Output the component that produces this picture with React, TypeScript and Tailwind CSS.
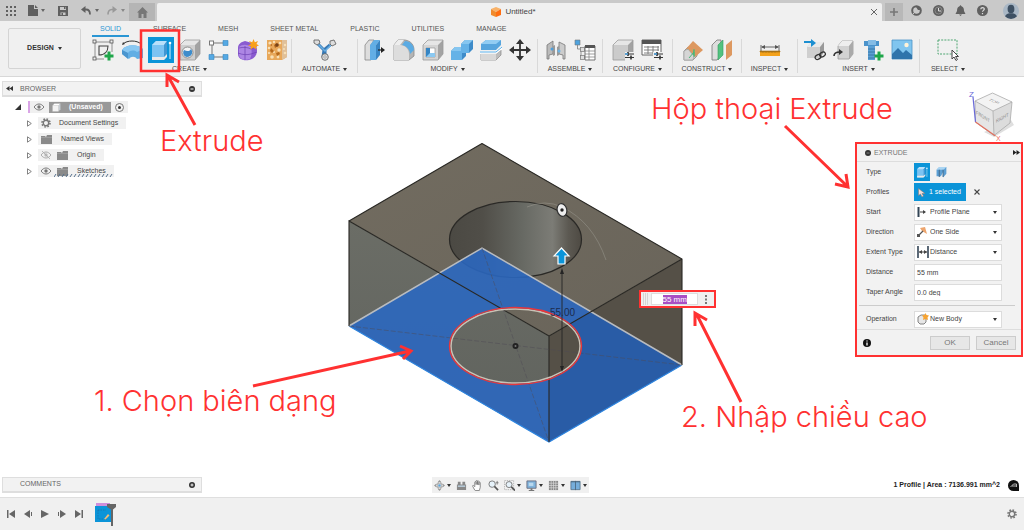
import React, { useState } from "react";
import clsx from "clsx";

type IconProps = { children: React.ReactNode; size?: string; box?: string };

function Icon({ children, size = "size-[22px]", box = "0 0 22 22" }: IconProps) {
  return (
    <svg className={clsx("shrink-0", size)} viewBox={box} fill="none" aria-hidden="true">
      {children}
    </svg>
  );
}

function Caret({ className = "text-[#333]" }: { className?: string }) {
  return (
    <svg className={clsx("h-[3px] w-1 shrink-0", className)} viewBox="0 0 4 3" aria-hidden="true">
      <path d="M0 0h4L2 3z" fill="currentColor" />
    </svg>
  );
}

// grey / blue isometric block shared by several ribbon icons
function Block({ front = "#cfcfcf", top = "#e6e6e6", side = "#a3a3a3" }) {
  return (
    <>
      <path d="M1 6l5-5h15l-5 5z" fill={top} />
      <path d="M16 6l5-5v14l-5 6z" fill={side} />
      <path d="M1 6h15v15H1z" fill={front} />
      <path d="M1 6l5-5h15v14l-5 6H1z" stroke="#9b9b9b" strokeWidth=".8" />
    </>
  );
}

const sketchIcon = (
  <Icon>
    <path d="M3 3h17M3 3v17M20 3v10M3 20h9" stroke="#777" strokeWidth=".8" />
    <path d="M7 7h9c0 5-3 9-9 9z" stroke="#444" strokeWidth="1.1" />
    {[[1, 1], [18, 1], [1, 18]].map(([x, y]) => (
      <rect key={`${x}${y}`} x={x} y={y} width="3" height="3" fill="#f0f0f0" stroke="#555" strokeWidth=".8" />
    ))}
    <path d="M17 12.500v9M12.500 17h9" stroke="#1fa64a" strokeWidth="3" />
  </Icon>
);

const revolveIcon = (
  <Icon>
    <path d="M2 5C6 1 16 1 20 5" stroke="#333" strokeWidth="1" />
    <path d="M1 6l1-3 2 2z" fill="#333" />
    <path d="M1 11C5 5 17 5 22 10v9l-6 1c-2-3-6-3-8 0l-7-5z" fill="#62aee4" />
    <path d="M1 11C5 5 17 5 22 10l-6 3c-3-2-7-2-9 1z" fill="#8ac8f2" />
    <path d="M1 11l6 3v6l-6-5z" fill="#4b96cf" />
  </Icon>
);

const extrudeIcon = (
  <Icon>
    <path d="M2 6l4-4h11l-2 4v12l-2 3H2z" fill="#7cc3f2" />
    <path d="M2 6l4-4h11l-3 4z" fill="#b9e0fa" />
    <path d="M14 6l3-4v14l-3 5z" fill="#4196d2" />
    <path d="M2 18h12l3-3v3l-3 3H2z" fill="#e9e9e9" />
    <path d="M20 4v16" stroke="#d9f0ff" strokeWidth="1" />
    <circle cx="20" cy="4" r="1.300" fill="#fff" />
  </Icon>
);

const holeIcon = (
  <Icon>
    <Block />
    <circle cx="8.500" cy="13.500" r="5.500" fill="#f5f5f5" stroke="#777" strokeWidth=".8" />
    <path d="M5 11c4 2 6 1 7-1 3 4 0 8-4 8-3 0-5-4-3-7z" fill="#3d8ccb" />
  </Icon>
);

const patternIcon = (
  <Icon>
    <path d="M5 4h11M4 5v11M5 18h11" stroke="#777" strokeWidth="1" />
    <rect x="1.500" y="2" width="4" height="4" fill="#fff" stroke="#777" />
    <path d="M15 1.500h5v5h-5zM1 15.500h5v5H1zM15 15.500h5v5h-5z" fill="#55a9e4" stroke="#3986bd" strokeWidth=".6" />
  </Icon>
);

const formIcon = (
  <Icon>
    <path d="M1 9c0-4 3-6 7-7l7 2c4 2 5 4 5 7 0 6-3 9-8 10-6 1-11-1-11-6z" fill="#8a5bd0" />
    <path d="M2 8c3-3 8-3 12 0 1 4 1 8-1 12-6 2-11 0-11-5z" fill="#ad86e4" />
    <path d="M2 9c4-1 8-1 12 1l6-3M8 7v14M1 14c5 2 9 2 13 1l6-2" stroke="#6f42b3" strokeWidth=".7" />
    <path d="M16.500 0l1.300 3.200L21 2l-1.500 3L22 6.500l-3 1 .5 3-3-2-3 2 .5-3-3-1 3-1.500L12 2l3.200 1.200z" fill="#f8a01c" />
  </Icon>
);

const volumetricIcon = (
  <Icon>
    <path d="M1 1h20v17l-5 3H1z" fill="#e8a85a" />
    <path d="M16 1h5v17l-5 3z" fill="#e0c099" />
    <g fill="#f8e0b6">
      <circle cx="4" cy="4" r="1.600" /><circle cx="8" cy="3" r="1.200" /><circle cx="3" cy="9" r="1.300" />
      <circle cx="13" cy="11" r="1.700" /><circle cx="6" cy="18" r="1.800" /><circle cx="12" cy="18" r="1.400" />
      <circle cx="19" cy="14" r="1.300" /><circle cx="19" cy="6" r="1.200" /><circle cx="3" cy="14" r="1.100" />
      <circle cx="14" cy="4" r="1.300" /><circle cx="18" cy="10" r="1" /><circle cx="8" cy="13" r="1" />
    </g>
    <path d="M8 6l3-2 1 3-3 2zM5 9l3 3-2 2-2-2zM10 14l3-1 1 2-3 2zM4 6l2-1v2z" fill="#b5691c" />
    <circle cx="11" cy="6" r="1.800" fill="#77431a" />
  </Icon>
);

const automateIcon = (
  <Icon size="h-[22px] w-6" box="0 0 24 22">
    <path d="M5 5l6 6 6-5M12 11v6M11 11l-1 7" stroke="#3779b5" strokeWidth="3" />
    <path d="M5 5l7 7 7-7" stroke="#69afe4" strokeWidth="1.500" />
    <path d="M1 1h5l1 3-3 2-3-2zM17 2l4-1 2 4-4 2-2-2z" fill="#ddd" stroke="#666" strokeWidth=".9" />
    <circle cx="12" cy="18" r="3.300" fill="#ddd" stroke="#666" strokeWidth=".9" />
    <circle cx="12" cy="18" r="1.200" fill="#fff" stroke="#777" strokeWidth=".6" />
  </Icon>
);

const pressPullIcon = (
  <Icon>
    <path d="M1 6l4-5h5L7 6v15H1z" fill="#ddd" stroke="#888" strokeWidth=".8" />
    <path d="M6 6l4-5h6l-4 5v15H6z" fill="#62aee5" />
    <path d="M12 6l4-5v15l-4 5z" fill="#3985c2" />
    <path d="M14 11h5" stroke="#222" strokeWidth="1.200" />
    <path d="M17 8l4 3-4 3z" fill="#222" />
  </Icon>
);

const filletIcon = (
  <Icon>
    <path d="M1 6l4-5h7c6 1 9 5 9 10v6l-5 4H1z" fill="#b5b5b5" stroke="#888" strokeWidth=".8" />
    <path d="M1 6l4-5h6L7 6z" fill="#eee" />
    <path d="M1 6h6c5 0 9 4 9 9v6H1z" fill="#ddd" />
    <path d="M9 6l3-4c5 0 9 4 9 9l-4 4c0-4-3-8-8-9z" fill="#5babe3" />
  </Icon>
);

const shellIcon = (
  <Icon>
    <Block front="#d4d4d4" />
    <path d="M4 9h9v9H4z" fill="#fff" stroke="#888" strokeWidth=".6" />
    <path d="M4 9l4 0v5h5v4H4z" fill="#3585c4" />
    <path d="M8 14h5v4H4z" fill="#8bc9f2" />
  </Icon>
);

const combineIcon = (
  <Icon>
    <path d="M10 5l4-4h8v9l-4 4h-3v3l-4 4H0v-9l4-4h6z" fill="#3d8bc9" />
    <path d="M10 5h8v9h-7v7H0v-9h10z" fill="#65b2e7" />
    <path d="M10 5l4-4h8l-4 4zM0 12l4-4h6v4z" fill="#86c6f0" />
  </Icon>
);

const splitIcon = (
  <Icon>
    <path d="M1 5l5-4h15v5l-5 5H1z" fill="#57a5dd" />
    <path d="M1 5l5-4h15l-5 4z" fill="#92cdf3" />
    <path d="M1 15h15l5-4v5l-5 5H1z" fill="#bcbcbc" stroke="#888" strokeWidth=".7" />
    <path d="M1 15h15v6H1z" fill="#d8d8d8" />
    <path d="M0 13.500h16l6-5" stroke="#fff" strokeWidth="2.500" />
    <path d="M0 13h16l6-5" stroke="#58aee8" strokeWidth="1" />
  </Icon>
);

const moveIcon = (
  <Icon>
    <path d="M11 3v16M3 11h16" stroke="#333" strokeWidth="1.800" />
    <path d="M11 0l4 5H7zM11 22l4-5H7zM0 11l5-4v8zM22 11l-5-4v8z" fill="#333" />
  </Icon>
);

const jointIcon = (
  <Icon>
    <path d="M2 6l6-4v13l-4 1v4H2z" fill="#bbb" stroke="#777" strokeWidth=".8" />
    <path d="M20 6l-6-3v12l4 1v4h2z" fill="#ccc" stroke="#777" strokeWidth=".8" />
    <path d="M8 7l2-1v10l-2 1zM14 7l-2 1v9l2-1z" fill="#999" />
    <circle cx="7" cy="10" r="1.500" fill="#4da0dd" />
    <circle cx="14" cy="12" r="1.500" fill="#69b4e7" />
  </Icon>
);

const bomIcon = (
  <Icon>
    <path d="M1 1h5v5H1z" fill="#4ea3df" stroke="#777" strokeWidth=".6" />
    <path d="M3.500 6v4H7v9h3M7 10h3" stroke="#888" strokeWidth=".9" />
    <rect x="6.500" y="8.500" width="4" height="4" fill="#ddd" stroke="#777" strokeWidth=".7" />
    <rect x="6.500" y="16.500" width="4" height="4" fill="#ddd" stroke="#777" strokeWidth=".7" />
    <path d="M11 7h10v14H11z" fill="#fff" stroke="#666" strokeWidth=".9" />
    <path d="M11 6h10v3H11z" fill="#555" />
    <path d="M11 12h10M11 15h10M11 18h10M15 9v12" stroke="#777" strokeWidth=".7" />
  </Icon>
);

const adjusters = (
  <>
    <path d="M13 15h9M13 18.500h9" stroke="#333" strokeWidth="1" />
    <path d="M16 13v4M19 16.500v4" stroke="#333" strokeWidth="1.600" />
    <path d="M13 15h3" stroke="#4ea3df" strokeWidth="1.600" />
  </>
);

const configureIcon = (
  <Icon>
    <Block front="#cbcbcb" />
    <path d="M13 13h9v9h-9z" fill="#f0f0f0" />
    {adjusters}
  </Icon>
);

const configTableIcon = (
  <Icon>
    <path d="M1 1h19v15H1z" fill="#fff" stroke="#555" strokeWidth=".9" />
    <path d="M1 1h19v4H1z" fill="#555" />
    <path d="M3 8h15M3 11h15M3 14h10M7 7v8M12 7v8M17 7v5" stroke="#777" strokeWidth=".9" />
    <path d="M12 13h10v9H12z" fill="#f0f0f0" />
    {adjusters}
  </Icon>
);

const planeIcon = (
  <Icon>
    <path d="M2 12l4-4h9v9l-4 4H2z" fill="#ccc" stroke="#888" strokeWidth=".8" />
    <path d="M2 12h9v9H2z" fill="#e4e4e4" />
    <path d="M11 2l10 9-8 7-9-8z" fill="#dd9860" />
    <path d="M5 10l7 7v-7M11 18l1-7" stroke="#49b878" strokeWidth="1" />
    <path d="M2 12l4-2 6 7-1 4H2z" fill="#d5d5d5" stroke="#999" strokeWidth=".6" />
    <path d="M7 19l5-6v5" stroke="#49b878" strokeWidth="1" />
  </Icon>
);

const midplaneIcon = (
  <Icon>
    <path d="M1 6l5-5h4v15l-4 5H1z" fill="#ddd" stroke="#777" strokeWidth=".8" />
    <path d="M7 6l5-5v15l-5 5z" fill="#52c27f" stroke="#349a5e" strokeWidth=".6" />
    <path d="M15 6l6-5v15l-6 5z" fill="#dd9860" />
  </Icon>
);

const measureIcon = (
  <Icon>
    <path d="M2 6v6M20 6v6M3 8h16" stroke="#555" strokeWidth=".9" />
    <path d="M2 8l4-2v4zM20 8l-4-2v4z" fill="#555" />
    <path d="M1 12h20v5H1z" fill="#f4a21b" />
    <path d="M1 12h20v1H1zM4 12v2M7 12v2M10 12v2M13 12v2M16 12v2" fill="#a97418" stroke="#a97418" strokeWidth=".6" />
  </Icon>
);

const deriveIcon = (
  <Icon>
    <path d="M3 8l4-5h13l-4 5v11H3z" fill="#cfcfcf" />
    <path d="M3 8l4-5h13l-4 5z" fill="#eaeaea" />
    <path d="M16 8l4-5v10l-4 6z" fill="#999" />
    <path d="M0 3h8" stroke="#1c8fd1" strokeWidth="2" />
    <path d="M7 0l5 4-5 4z" fill="#1c8fd1" />
    <ellipse cx="14" cy="18" rx="3" ry="2.200" transform="rotate(-30 14 18)" stroke="#333" strokeWidth="1.300" />
    <ellipse cx="18.500" cy="15.500" rx="3" ry="2.200" transform="rotate(-30 18.500 15.500)" stroke="#333" strokeWidth="1.300" />
  </Icon>
);

const insertPartIcon = (
  <Icon>
    <path d="M5 7l4-5h11v13l-4 5H5z" fill="#d2d2d2" stroke="#999" strokeWidth=".8" />
    <path d="M5 7l4-5h11l-4 5z" fill="#eee" />
    <path d="M16 7l4-5v13l-4 5z" fill="#aaa" />
    <path d="M1 17c0-3 2-4 6-4" stroke="#333" strokeWidth="1.600" />
    <path d="M6 10l4 3-4 3z" fill="#333" />
  </Icon>
);

const fastenerIcon = (
  <Icon>
    <path d="M2 2h15v5H2z" fill="#4b93cb" />
    <path d="M6 1h8v5H6z" fill="#85bce5" />
    <path d="M6 7h7v14H6z" fill="#5b9fd4" />
    <path d="M6 10h7M6 13h7M6 16h7M6 19h7" stroke="#316f9f" strokeWidth=".8" />
    <path d="M17 12.500v9M12.500 17h9" stroke="#1fa64a" strokeWidth="3" />
  </Icon>
);

const canvasIcon = (
  <Icon>
    <path d="M1 1h20v19H1z" fill="#80c5ef" stroke="#4a93c6" strokeWidth=".8" />
    <circle cx="15.500" cy="6" r="2.200" fill="#fff3d8" />
    <path d="M1 15l6-6 5 5 3-3 6 5v4H1z" fill="#2f74ab" />
  </Icon>
);

const selectIcon = (
  <Icon size="h-[22px] w-6" box="0 0 24 22">
    <path d="M2 1h19v14H2z" stroke="#4ea672" strokeWidth="1" strokeDasharray="2 1.200" />
    <path d="M16 11v9l2-2 2 3.500 1.500-1-2-3h3z" fill="#fff" stroke="#444" strokeWidth="1" />
  </Icon>
);

const groups = [
  {
    name: "CREATE",
    width: "w-[204px]",
    icons: [sketchIcon, revolveIcon, extrudeIcon, holeIcon, patternIcon, formIcon, volumetricIcon],
  },
  { name: "AUTOMATE", width: "w-[66px]", icons: [automateIcon] },
  {
    name: "MODIFY",
    width: "w-[180px]",
    icons: [pressPullIcon, filletIcon, shellIcon, combineIcon, splitIcon, moveIcon],
  },
  { name: "ASSEMBLE", width: "w-[65px]", icons: [jointIcon, bomIcon] },
  { name: "CONFIGURE", width: "w-[70px]", icons: [configureIcon, configTableIcon] },
  { name: "CONSTRUCT", width: "w-[69px]", icons: [planeIcon, midplaneIcon] },
  { name: "INSPECT", width: "w-[56px]", icons: [measureIcon] },
  { name: "INSERT", width: "w-[122px]", icons: [deriveIcon, insertPartIcon, fastenerIcon, canvasIcon] },
  { name: "SELECT", width: "w-[56px]", icons: [selectIcon] },
];

const tabs = ["SOLID", "SURFACE", "MESH", "SHEET METAL", "PLASTIC", "UTILITIES", "MANAGE"];

function TitleBar() {
  return (
    <header className="flex h-[21px] bg-[#c9c9c9] text-[#606060]">
      <div className="flex w-[129px] shrink-0 items-center pl-[6px]">
        <button aria-label="Data panel">
          <Icon size="size-[10px]" box="0 0 10 10">
            {[0, 4, 8].map((y) => (
              <path key={y} d={`M0 ${y}h2v2H0zM4 ${y}h2v2H4zM8 ${y}h2v2H8z`} fill="currentColor" />
            ))}
          </Icon>
        </button>
        <button aria-label="File" className="ml-3 flex items-center gap-[3px]">
          <Icon size="h-[11px] w-[10px]" box="0 0 10 11">
            <path d="M0 0h6v4h4v7H0zM7 0l3 3H7z" fill="currentColor" />
          </Icon>
          <Caret className="text-[#666]" />
        </button>
        <button aria-label="Save" className="ml-[13px]">
          <Icon size="size-[10px]" box="0 0 10 10">
            <path d="M0 0h10v10H0z" fill="currentColor" />
            <path d="M2 1h6v3H2zM2.500 6.500h5V9h-5z" fill="#c9c9c9" />
            <path d="M6 1h1.500v2H6zM3.500 7h1.500v2H3.500z" fill="currentColor" />
          </Icon>
        </button>
        <button aria-label="Undo" className="ml-[13px] flex items-center gap-1">
          <Icon size="h-[10px] w-[10px]" box="0 0 10 10">
            <path d="M3.500 3.500H5c3 0 4 2 4 5" stroke="currentColor" strokeWidth="1.800" />
            <path d="M0 3.500L4.500 0v7z" fill="currentColor" />
          </Icon>
          <Caret className="text-[#666]" />
        </button>
        <button aria-label="Redo" className="ml-2 flex items-center gap-1 text-[#999]">
          <Icon size="h-[10px] w-[10px]" box="0 0 10 10">
            <path d="M6.500 3.500H5c-3 0-4 2-4 5" stroke="currentColor" strokeWidth="1.600" />
            <path d="M10 3.500L5.500 0v7z" fill="currentColor" />
          </Icon>
          <Caret className="text-[#888]" />
        </button>
      </div>
      <button aria-label="Home" className="mt-[3px] flex w-[26px] shrink-0 items-center justify-center bg-[#b5b5b5]">
        <Icon size="size-[11px]" box="0 0 11 11">
          <path d="M5.500 0L11 5.500H9.500V11h-3V7h-2v4h-3V5.500H0z" fill="#777" />
        </Icon>
      </button>
      <div className="mt-[3px] ml-[2px] flex flex-1 items-center rounded-t-xs bg-[#f0f0f0] pr-1">
        <div className="flex flex-1 items-center justify-center gap-1 text-[8px] leading-[18px] text-[#444]">
          <Icon size="size-[10px]" box="0 0 10 10">
            <path d="M5 0l5 2-5 3-5-3z" fill="#f9b268" />
            <path d="M0 2l5 3v5L0 8z" fill="#f08a2c" />
            <path d="M10 2L5 5v5l5-2z" fill="#ff6d10" />
          </Icon>
          Untitled*
        </div>
        <button aria-label="Close">
          <Icon size="size-2" box="0 0 8 8">
            <path d="M1 1l6 6M7 1L1 7" stroke="#666" strokeWidth="1" />
          </Icon>
        </button>
      </div>
      <button aria-label="New tab" className="mt-[3px] ml-[3px] flex w-[18px] items-center justify-center bg-[#b8b8b8]">
        <Icon size="size-2" box="0 0 8 8">
          <path d="M4 0v8M0 4h8" stroke="#777" strokeWidth="1.600" />
        </Icon>
      </button>
      <div className="flex items-center gap-[11px] pr-[5px] pl-2">
        <button aria-label="Extensions">
          <Icon size="size-[11px]" box="0 0 11 11">
            <circle cx="5.500" cy="5.500" r="4.300" stroke="currentColor" strokeWidth="2" />
            <path d="M5 2h4v3H7z" fill="currentColor" />
            <path d="M2 9l3-3" stroke="#c9c9c9" strokeWidth="1" />
          </Icon>
        </button>
        <button aria-label="Job status">
          <Icon size="size-[11px]" box="0 0 11 11">
            <circle cx="5.500" cy="5.500" r="5.500" fill="currentColor" />
            <circle cx="5.500" cy="5.500" r="3.500" stroke="#999" strokeWidth=".7" />
            <path d="M5.500 3v3H8" stroke="#ddd" strokeWidth="1" />
          </Icon>
        </button>
        <button aria-label="Notifications">
          <Icon size="size-[11px]" box="0 0 11 11">
            <path d="M5.500 0l1 1.300C8.500 2 9 4 9 6l1.500 3H.5L2 6c0-2 .5-4 2.500-4.700zM4 9.500h3L5.500 11z" fill="currentColor" />
          </Icon>
        </button>
        <button aria-label="Help">
          <Icon size="size-[11px]" box="0 0 11 11">
            <circle cx="5.500" cy="5.500" r="5.500" fill="currentColor" />
            <path d="M3.800 4.300c0-2.300 3.500-2.300 3.500-.2 0 1.300-1.800 1.300-1.800 2.700M5.500 8v1.300" stroke="#ddd" strokeWidth="1.200" />
          </Icon>
        </button>
        <button aria-label="Account" className="ml-1">
          <Icon size="size-4" box="0 0 16 16">
            <circle cx="8" cy="8" r="8" fill="#a9b7c5" />
            <ellipse cx="8" cy="6" rx="3.400" ry="4.300" fill="#3e5063" />
            <path d="M2 13.200c1-2.200 3-2.500 4.500-3h3c1.500.5 3.500.8 4.500 3A8 8 0 012 13.200z" fill="#3e5063" />
          </Icon>
        </button>
      </div>
    </header>
  );
}

function Ribbon() {
  const [active, setActive] = useState("SOLID");
  return (
    <div className="flex h-14 border-b border-[#d8d8d8] bg-[#f0f0f0]">
      <button className="mt-[7px] ml-2 flex h-[41px] w-[73px] shrink-0 items-center justify-center gap-1 rounded-xs border border-[#d4d4d4] text-[7px] font-bold text-[#333]">
        DESIGN <Caret />
      </button>
      <div className="ml-[7px] min-w-0 flex-1">
        <nav className="ml-1 flex h-4 gap-4">
          {tabs.map((tab) => (
            <button
              key={tab}
              onClick={() => setActive(tab)}
              className={clsx(
                "border-b-2 px-2 pt-[2px] text-[7px] leading-3",
                tab === active ? "border-[#2a96d4] text-[#2a96d4]" : "border-transparent text-[#555]"
              )}
            >
              {tab}
            </button>
          ))}
        </nav>
        <div className="mt-[2px] flex">
          {groups.map((group) => (
            <section
              key={group.name}
              className={clsx("flex shrink-0 flex-col items-center border-r border-[#d9d9d9] last:border-r-0", group.width)}
            >
              <div className="flex h-[22px] gap-[7px]">
                {group.icons.map((icon, i) => (
                  <button
                    key={i}
                    aria-label={`${group.name} ${i + 1}`}
                    className={clsx("h-[22px]", icon === extrudeIcon && "bg-[#0b94d8] outline-2 outline-[#0b94d8]")}
                  >
                    {icon}
                  </button>
                ))}
              </div>
              <button className="mt-1 flex h-2 items-center gap-[3px] text-[7px] text-[#444]">
                {group.name} <Caret />
              </button>
            </section>
          ))}
        </div>
      </div>
    </div>
  );
}

function Eye({ hidden = false }: { hidden?: boolean }) {
  return (
    <Icon size="h-2 w-[10px]" box="0 0 10 8">
      <path d="M0 4c3-4 7-4 10 0-3 4-7 4-10 0z" stroke={hidden ? "#aaa" : "#777"} strokeWidth="1" />
      <circle cx="5" cy="4" r="1.700" fill={hidden ? "#bbb" : "#777"} />
      {hidden && <path d="M1 0l8 8" stroke="#aaa" strokeWidth=".8" />}
    </Icon>
  );
}

function Gear({ size }: { size: string }) {
  return (
    <Icon size={size} box="0 0 10 10">
      <circle cx="5" cy="5" r="4" stroke="#777" strokeWidth="1.600" strokeDasharray="1.600 1.540" />
      <circle cx="5" cy="5" r="2.700" stroke="#777" strokeWidth="1.400" />
    </Icon>
  );
}

function Folder() {
  return (
    <Icon size="h-[9px] w-[11px]" box="0 0 11 9">
      <path d="M0 1h4l1 1 1-2h5v9H0z" fill="#8a8a8a" />
      <path d="M0 2.500h11" stroke="#aaa" strokeWidth=".6" />
    </Icon>
  );
}

function TreeArrow() {
  return (
    <Icon size="h-[7px] w-[5px]" box="0 0 5 7">
      <path d="M.5.800v5.400L4.300 3.500z" stroke="#666" strokeWidth=".8" />
    </Icon>
  );
}

const treeRows = [
  { label: "Document Settings", icon: <Gear size="size-[10px]" />, gap: "gap-2" },
  { label: "Named Views", icon: <Folder />, gap: "gap-[9px]" },
  { label: "Origin", icon: <Folder />, eye: <Eye hidden />, gap: "gap-[9px]" },
  { label: "Sketches", icon: <Folder />, eye: <Eye />, gap: "gap-[9px]", hatched: true },
];

function Browser() {
  return (
    <aside className="mt-1 ml-[2px] w-[200px] text-[7px] text-[#444]">
      <div className="flex h-4 items-center border border-b-2 border-[#dedede] bg-[#f2f2f2] px-[3px] text-[#666]">
        <button aria-label="Collapse">
          <Icon size="h-[5px] w-[7px]" box="0 0 7 5">
            <path d="M3.500 0v5L0 2.500zM7 0v5L3.500 2.500z" fill="#333" />
          </Icon>
        </button>
        <span className="ml-[7px] flex-1 leading-[14px]">BROWSER</span>
        <button aria-label="Minimize" className="mr-[3px]">
          <Icon size="size-[6px]" box="0 0 6 6">
            <circle cx="3" cy="3" r="3" fill="#333" />
            <path d="M1.500 3h3" stroke="#fff" strokeWidth="1" />
          </Icon>
        </button>
      </div>
      <ul>
        <li className="mt-[2px] flex h-4 items-center pl-[13px]">
          <Icon size="size-[6px]" box="0 0 6 6">
            <path d="M6 0v6H0z" fill="#333" />
          </Icon>
          <div className="ml-[7px] flex h-3 items-center border-l-2 border-[#d9a4e6] bg-[#f0f0f0] pl-1">
            <Eye />
            <span className="ml-[5px] flex h-[11px] items-center gap-2 bg-[#999] pr-2 pl-[3px] font-bold text-white">
              <Icon size="size-[9px]" box="0 0 22 22">
                <Block front="#f3f3f3" top="#fff" side="#c9cfd6" />
              </Icon>
              (Unsaved)
            </span>
            <input
              type="radio"
              defaultChecked
              aria-label="Activate component"
              className="mx-1 size-[9px] appearance-none rounded-full border border-[#777] bg-[#333] bg-clip-content p-[2px]"
            />
          </div>
        </li>
        {treeRows.map((row) => (
          <li key={row.label} className="flex h-4 items-center pl-[25px]">
            <TreeArrow />
            <div className={clsx("relative ml-[6px] flex h-3 items-center bg-[#f1f1f1] pr-2 pl-[3px] leading-3", row.gap)}>
              <span className="flex items-center gap-[6px]">
                {row.eye}
                {row.icon}
              </span>
              {row.label}
              {row.hatched && (
                <svg className="absolute right-0 bottom-0 h-[3px] w-[60px]" viewBox="0 0 60 3" aria-hidden="true">
                  {Array.from({ length: 15 }, (_, i) => (
                    <path key={i} d={`M${i * 4} 3l2-3`} stroke="#55708c" strokeWidth="1" />
                  ))}
                </svg>
              )}
            </div>
          </li>
        ))}
      </ul>
    </aside>
  );
}

function ViewCube() {
  return (
    <svg className="mr-[6px] h-[54px] w-[52px]" viewBox="966 88 52 54" aria-label="View cube">
      <path d="M984 132l10 5 20-12-3-5z" fill="#d2d2d2" opacity=".7" />
      <path d="M975 101l17.500-8 19.500 9-19 9z" fill="#f3f3f3" />
      <path d="M975 101l18 10 1 24.500-18.500-13.500z" fill="#e5e5e5" />
      <path d="M1012 102l-19 9 1 24.500 16-12.500z" fill="#dcdcdc" />
      <path d="M975 101l17.500-8 19.500 9-2 21-16 12.500-18.500-13.500zM975 101l18 10 19-9M993 111l1 24.500" fill="none" stroke="#aaa" strokeWidth=".8" />
      <path d="M973 97l2.500 25" stroke="#6868d8" strokeWidth="1.200" />
      <path d="M975.500 122l20 14" stroke="#e2705e" strokeWidth="1.200" />
      <g className="font-[Liberation_Sans,sans-serif]" fontSize="5" fill="#888">
        <text transform="matrix(.9 .42 -.8 .4 988 100)">TOP</text>
        <text transform="matrix(.8 .5 0 1 976 114)">FRONT</text>
        <text transform="matrix(.8 -.45 0 1 996 123)">RIGHT</text>
        <text x="969" y="97" fontSize="8" fill="#6868d8">Z</text>
        <text x="996" y="141" fontSize="7" fill="#ee6a60">X</text>
      </g>
    </svg>
  );
}

const planeStart = (
  <Icon size="size-[10px]" box="0 0 10 10">
    <path d="M1.500 0v10" stroke="#334455" strokeWidth="2" />
    <path d="M3 5h5" stroke="#444" strokeWidth="1" />
    <path d="M6 3l3 2-3 2z" fill="#444" />
  </Icon>
);

const oneSide = (
  <Icon size="size-[10px]" box="0 0 10 10">
    <path d="M3 1l5-1 2 7-5-3z" fill="#eda56e" />
    <path d="M1 9l5-5" stroke="#555" strokeWidth="1.300" />
    <path d="M0 7h3v3H0z" fill="#555" />
  </Icon>
);

const distanceIcon = (
  <Icon size="size-3" box="0 0 12 12">
    <path d="M1 0v12M11 0v12" stroke="#334455" strokeWidth="1.600" />
    <path d="M2 6h8" stroke="#444" strokeWidth="1" />
    <path d="M2 6l3-2v4zM10 6L7 4v4z" fill="#444" />
  </Icon>
);

const newBody = (
  <Icon size="size-3" box="0 0 12 12">
    <path d="M1 4l3-2h5v7l-2 2H3L1 9z" fill="#e7e7e7" stroke="#777" strokeWidth=".9" />
    <path d="M8.500 0l1 2 2.500.5-1.500 2 .5 2.500-2.500-1L6 7l.5-2.500-1.500-2L7.500 2z" fill="#f6a331" />
  </Icon>
);

function Field({ label, children }: { label: string; children: React.ReactNode }) {
  return (
    <div className="flex h-5 items-center">
      <label htmlFor={label} className="w-12 shrink-0">
        {label}
      </label>
      {children}
    </div>
  );
}

function SelectField({ label, value, icon }: { label: string; value: string; icon: React.ReactNode }) {
  return (
    <Field label={label}>
      <div className="relative flex h-[17px] w-[88px] items-center border border-[#dcdcdc] bg-white">
        <span className="pointer-events-none absolute left-[2px]">{icon}</span>
        <select id={label} className="w-full appearance-none pl-[15px] leading-4 outline-none">
          <option>{value}</option>
        </select>
        <span className="pointer-events-none absolute right-1 flex">
          <Caret />
        </span>
      </div>
    </Field>
  );
}

function TextField({ label, value }: { label: string; value: string }) {
  return (
    <Field label={label}>
      <input
        id={label}
        defaultValue={value}
        className="h-[17px] w-[88px] border border-[#dcdcdc] bg-white pl-[2px] leading-[15px] outline-none"
      />
    </Field>
  );
}

function ExtrudeDialog() {
  return (
    <form
      onSubmit={(e) => e.preventDefault()}
      className="mr-px w-[168px] border-2 border-[#ff3131] bg-[#f2f2f2] text-[7px] text-[#444]"
    >
      <div className="flex h-[18px] items-center border-b border-[#ddd] pr-px pl-2 text-[#777]">
        <Icon size="size-[6px]" box="0 0 6 6">
          <circle cx="3" cy="3" r="3" fill="#333" />
          <path d="M1.500 3h3" stroke="#999" strokeWidth=".8" />
        </Icon>
        <h2 className="ml-[3px] flex-1 leading-4">EXTRUDE</h2>
        <Icon size="h-[5px] w-[7px]" box="0 0 7 5">
          <path d="M0 0v5l3.500-2.500zM3.500 0v5L7 2.500z" fill="#222" />
        </Icon>
      </div>
      <div className="pl-[9px]">
        <Field label="Type">
          <button id="Type" type="button" aria-label="Extrude" className="flex h-[18px] w-4 items-center justify-center bg-[#0b94d8]">
            <Icon size="size-3">{extrudeIcon.props.children}</Icon>
          </button>
          <button type="button" aria-label="Thin extrude" className="ml-[6px]">
            <Icon size="size-3">
              <path d="M1 7l5-5h13v12l-6 7V11l-4 8H1z" fill="#5b9fd4" />
              <path d="M1 7l5-5h13l-5 5z" fill="#abd5f2" />
              <path d="M6 7v13M13 7v13" stroke="#456f92" strokeWidth="2" />
            </Icon>
          </button>
        </Field>
        <Field label="Profiles">
          <button id="Profiles" type="button" className="flex h-[18px] w-[52px] items-center gap-1 bg-[#0b94d8] pl-1 text-white">
            <Icon size="h-[9px] w-[7px]" box="0 0 7 9">
              <path d="M.5.500v7L2.500 6 4 9l1.500-1L4 5.500h3z" fill="#f3dfda" stroke="#88736e" strokeWidth=".5" />
            </Icon>
            1 selected
          </button>
          <button type="button" aria-label="Clear selection" className="ml-2">
            <Icon size="size-[6px]" box="0 0 6 6">
              <path d="M.5.500l5 5M5.500.500l-5 5" stroke="#444" strokeWidth="1.100" />
            </Icon>
          </button>
        </Field>
        <SelectField label="Start" value="Profile Plane" icon={planeStart} />
        <SelectField label="Direction" value="One Side" icon={oneSide} />
        <SelectField label="Extent Type" value="Distance" icon={distanceIcon} />
        <TextField label="Distance" value="55 mm" />
        <TextField label="Taper Angle" value="0.0 deg" />
      </div>
      <div className="mr-[6px] ml-[2px] mt-[3px] border-t border-[#ccc] pt-[3px] pl-[7px]">
        <SelectField label="Operation" value="New Body" icon={newBody} />
      </div>
      <div className="flex h-[26px] items-center gap-[6px] border-t border-[#ddd] pr-[5px] pl-[6px] text-[8px] text-[#777]">
        <Icon size="size-2" box="0 0 8 8">
          <circle cx="4" cy="4" r="4" fill="#111" />
          <path d="M4 3.500V6.500M4 1.500v1" stroke="#fff" strokeWidth="1.300" />
        </Icon>
        <button className="ml-auto h-[14px] w-10 border border-[#ccc] bg-[#e7e7e7]">OK</button>
        <button type="button" className="h-[14px] w-10 border border-[#ccc] bg-[#e7e7e7]">
          Cancel
        </button>
      </div>
    </form>
  );
}

function Model() {
  return (
    <svg className="absolute inset-0 size-full" viewBox="0 77 1024 420" aria-label="Model">
      <defs>
        <linearGradient id="hole" x1="0" x2="1" y1="0" y2="0">
          <stop offset="0" stopColor="#4b4943" />
          <stop offset=".25" stopColor="#504e48" />
          <stop offset=".55" stopColor="#676963" />
          <stop offset=".78" stopColor="#7c7c76" />
          <stop offset=".9" stopColor="#5c5952" />
          <stop offset="1" stopColor="#4e4a43" />
        </linearGradient>
        <linearGradient id="left" x1="0" x2="0" y1="0" y2="1">
          <stop offset="0" stopColor="#6b6d66" />
          <stop offset="1" stopColor="#5f625d" />
        </linearGradient>
        <linearGradient id="top" x1="0" x2="1" y1="0" y2="1">
          <stop offset="0" stopColor="#726c60" />
          <stop offset="1" stopColor="#69645a" />
        </linearGradient>
      </defs>
      <path d="M482 143.500L682 259 549 336 349 221z" fill="url(#top)" />
      <path d="M349 221L549 336V442L349 326z" fill="url(#left)" />
      <path d="M682 259L549 336V442L682 365z" fill="#555047" />
      <ellipse cx="515.500" cy="239.500" rx="66" ry="38" fill="url(#hole)" stroke="#2a2926" strokeWidth="1.200" />
      <path
        d="M482 248L682 365 549 442 349 326zM449.500 346a66 38 0 10132 0a66 38 0 10-132 0z"
        fill="#2a68c2"
        fillOpacity=".88"
        fillRule="evenodd"
      />
      <path d="M570 324L591 312 682 365 549 442V378.700A66 38 0 00570 324z" fill="#12356e" fillOpacity=".18" />
      <path d="M349 326L549 442 682 365" fill="none" stroke="#2f86e0" strokeWidth="1.200" />
      <path d="M349 326L482 248 682 365" fill="none" stroke="#b9bcc0" strokeWidth="1.500" />
      <path d="M482 143.500L682 259V365M682 259L549 336V442M549 336L349 221V326M349 221L482 143.500" fill="none" stroke="#282723" strokeWidth="1.100" />
      <path d="M482 248L549 442M349 326L682 365" stroke="#4f4a55" strokeOpacity=".6" strokeWidth=".8" strokeDasharray="5 2" />
      <ellipse cx="515.500" cy="346" rx="64.500" ry="37" fill="none" stroke="#c9c2b6" strokeWidth="1.500" />
      <ellipse cx="515.500" cy="346" rx="66" ry="38.500" fill="none" stroke="#e8363c" strokeWidth="1.300" />
      <circle cx="515.500" cy="346" r="3" fill="#222" />
      <circle cx="515.500" cy="346" r="1" fill="#777" />
      <path d="M527 207Q545 199 562 207Q593 222 606 260" fill="none" stroke="#99968e" strokeOpacity=".6" strokeWidth=".9" />
      <path d="M562 272V370" stroke="#242424" strokeWidth=".9" />
      <path d="M562 268l2 6h-4zM562 372l2-6h-4z" fill="#242424" />
      <text x="550" y="316" className="font-[Liberation_Sans,sans-serif]" fontSize="10" fill="#1d2c4c">
        55.00
      </text>
      <ellipse cx="562" cy="210" rx="4.800" ry="6.500" transform="rotate(-15 562 210)" fill="#eee" stroke="#333" strokeWidth="1.200" />
      <circle cx="562" cy="210" r="1.700" fill="#222" />
      <path d="M561.500 248l7.500 8h-4v8h-7v-8h-4z" fill="#0b94d8" stroke="#fff" strokeWidth="1.200" />
    </svg>
  );
}

function DistanceInput() {
  return (
    <div className="absolute top-[213px] left-[639px] flex h-[18px] w-[77px] items-center border-2 border-[#ff3131] bg-[#f0f0f0] text-[8px]">
      <span className="mx-[2px] h-3 w-[6px] bg-[repeating-linear-gradient(90deg,#d5d5d5_0_1px,#f0f0f0_1px_2px)]" />
      <label className="flex h-3 flex-1 items-center justify-center border border-[#ddd] bg-white">
        <input
          aria-label="Distance value"
          defaultValue="55 mm"
          className="h-[9px] w-6 bg-[#a84fc4] text-center leading-[9px] text-white outline-none"
        />
      </label>
      <button aria-label="More" className="flex w-4 justify-center">
        <Icon size="h-[9px] w-[2px]" box="0 0 2 9">
          <path d="M0 0h2v2H0zM0 3.500h2v2H0zM0 7h2v2H0z" fill="#777" />
        </Icon>
      </button>
    </div>
  );
}

const navTools = [
  {
    name: "Orbit",
    caret: true,
    art: (
      <>
        <path d="M6 0l2 2.500H4zM6 12l2-2.500H4zM0 6l2.500-2v4zM12 6L9.500 4v4z" fill="#999" />
        <ellipse cx="6" cy="6" rx="4.500" ry="2" stroke="#999" strokeWidth=".8" />
        <ellipse cx="6" cy="6" rx="2" ry="4.500" stroke="#999" strokeWidth=".8" />
        <circle cx="6" cy="6" r="1.300" fill="#5ba5dc" />
      </>
    ),
  },
  {
    name: "Look at",
    art: (
      <>
        <path d="M1 5h10v6H1zM2 2h3v3H2zM7 2h3v3H7z" fill="#888" />
        <path d="M2 6h8v1.500H2z" fill="#bcd2e2" />
      </>
    ),
  },
  {
    name: "Pan",
    art: <path d="M3 11L.8 7c-.6-1 .6-1.500 1.200-.7l1 1V2.500c0-1 1.500-1 1.500 0V5 1.200c0-1 1.500-1 1.500 0V5 1.700c0-1 1.500-1 1.500 0V5.500 3c0-1 1.500-1 1.500 0v5l-1 3.500H3.500z" fill="#fff" stroke="#777" strokeWidth=".9" />,
  },
  {
    name: "Zoom",
    art: (
      <>
        <circle cx="4.500" cy="4.500" r="3.500" fill="#e6f2fa" stroke="#777" />
        <path d="M7 7l4 4" stroke="#555" strokeWidth="1.800" />
        <path d="M10 1v4M8.500 3h3" stroke="#666" strokeWidth=".8" />
      </>
    ),
  },
  {
    name: "Fit",
    caret: true,
    art: (
      <>
        <path d="M.5.500h10v10H.5z" stroke="#999" strokeWidth=".7" strokeDasharray="1.500 1" />
        <circle cx="5.500" cy="5" r="3.300" fill="#e6f2fa" stroke="#777" />
        <path d="M8 7.500l4 4" stroke="#555" strokeWidth="1.800" />
      </>
    ),
  },
  {
    name: "Display settings",
    caret: true,
    art: (
      <>
        <path d="M1 1h10v8H1z" fill="#7fb3dc" stroke="#667" strokeWidth=".9" />
        <path d="M3 3h5v3.500H3z" fill="#b9d8ee" />
        <path d="M5 9h2v2h2v1H3v-1h2z" fill="#777" />
      </>
    ),
  },
  {
    name: "Grid and snaps",
    caret: true,
    art: (
      <>
        <path d="M1 1h10v10H1z" fill="#888" />
        <path d="M3.500 1v10M6 1v10M8.500 1v10M1 3.500h10M1 6h10M1 8.500h10" stroke="#ddd" strokeWidth=".7" />
      </>
    ),
  },
  {
    name: "Viewports",
    caret: true,
    art: (
      <>
        <path d="M1 1.500h10v9H1z" fill="#76aedb" stroke="#56738c" strokeWidth=".9" />
        <path d="M6 1v10M1 2h10" stroke="#48647b" strokeWidth=".9" />
      </>
    ),
  },
];

function BottomBar() {
  return (
    <div className="grid grid-cols-[1fr_auto_1fr] items-center px-[5px] pb-1 pl-[2px]">
      <div className="flex h-4 w-[200px] items-center border border-b-2 border-[#dedede] bg-[#f2f2f2] pr-[6px] pl-[17px] text-[7px] text-[#666]">
        <span className="flex-1">COMMENTS</span>
        <button aria-label="Add comment">
          <Icon size="size-[6px]" box="0 0 6 6">
            <circle cx="3" cy="3" r="3" fill="#333" />
            <path d="M1.500 3h3M3 1.500v3" stroke="#fff" strokeWidth=".9" />
          </Icon>
        </button>
      </div>
      <div className="flex h-4 items-center gap-[5px] bg-[#f0f0f0] px-[2px]">
        {navTools.map((tool) => (
          <button key={tool.name} aria-label={tool.name} className="flex items-center gap-[2px]">
            <Icon size="size-[11px]" box="0 0 12 12">
              {tool.art}
            </Icon>
            {tool.caret && <Caret />}
          </button>
        ))}
      </div>
      <div className="flex items-center justify-end gap-2 text-[7px] font-bold text-[#222]">
        1 Profile | Area : 7136.991 mm^2
        <button aria-label="Assistant">
          <Icon size="size-[11px]" box="0 0 11 11">
            <path d="M5.500 0A5.500 5.500 0 105.500 11H11V5.500A5.500 5.500 0 005.500 0z" fill="#111" />
            <path d="M2.500 7l3-3h3v3M4 6h4" stroke="#ccc" strokeWidth=".9" />
          </Icon>
        </button>
      </div>
    </div>
  );
}

const playback = [
  { name: "Start", d: "M0 0h1.500v8H0zM8 0v8L2 4z" },
  { name: "Step back", d: "M6 0v8L0 4zM7 2h1v4H7z" },
  { name: "Play", d: "M0 0l8 4-8 4z" },
  { name: "Step forward", d: "M2 0l6 4-6 4zM0 2h1v4H0z" },
  { name: "End", d: "M6.500 0H8v8H6.500zM0 0l6 4-6 4z" },
];

function Timeline() {
  return (
    <footer className="flex h-[33px] items-center border-t border-[#dfdfdf] bg-[#f0f0f0] px-[7px]">
      <div className="flex gap-[9px]">
        {playback.map((item) => (
          <button key={item.name} aria-label={item.name}>
            <Icon size="size-2" box="0 0 8 8">
              <path d={item.d} fill="#666" />
            </Icon>
          </button>
        ))}
      </div>
      <button aria-label="Sketch1" className="ml-3">
        <Icon size="h-6 w-[21px]" box="0 0 21 24">
          <path d="M1 1h14v3H1z" fill="#cf8fdc" />
          <path d="M0 4h16v16H0z" fill="#0b94d8" />
          <path d="M3 8v9h9M3 8h8" stroke="#1d72ab" strokeWidth=".8" strokeDasharray="1.500 1" />
          <path d="M9 17l4-5 1.500 1.500-4 4z" fill="#f2bc77" />
          <path d="M12 2h9v3l-3 2.500V24h-2V7.500L12 5z" fill="#666" />
        </Icon>
      </button>
      <button aria-label="Timeline settings" className="ml-auto">
        <Gear size="size-[10px]" />
      </button>
    </footer>
  );
}

// call-outs drawn over the whole window
function Annotations() {
  return (
    <svg className="pointer-events-none absolute inset-0 size-full" viewBox="0 0 1024 530">
      <g fill="none" stroke="#ff3131" strokeWidth="3">
        <rect x="141" y="30.500" width="38" height="40.500" strokeWidth="2.500" />
        <path d="M195 125L168 76M167 87V75L179 82" />
        <path d="M253 386L410 351M400 346L411 351 403 359" />
        <path d="M741 402L697 315M695 326V313L707 320" />
        <path d="M785 126L847 186M846 174L848 187 835 184" />
      </g>
      <g fill="#ff3131" fontSize="29" fontWeight="300" className="font-[Inter,'Open_Sans',sans-serif]">
        <text x="160" y="151">Extrude</text>
        <text x="651" y="119">Hộp thoại Extrude</text>
        <text x="94" y="411">1. Chọn biên dạng</text>
        <text x="681" y="427">2. Nhập chiều cao</text>
      </g>
    </svg>
  );
}

export default function App() {
  return (
    <div className="relative flex min-h-screen flex-col bg-white font-['Liberation_Sans',Arial,sans-serif]">
      <TitleBar />
      <Ribbon />
      <main className="relative flex flex-1 flex-col justify-between">
        <Model />
        <DistanceInput />
        <div className="relative flex items-start justify-between">
          <Browser />
          <div className="flex flex-col items-end pt-[11px]">
            <ViewCube />
            <ExtrudeDialog />
          </div>
        </div>
        <div className="relative">
          <BottomBar />
        </div>
      </main>
      <Timeline />
      <Annotations />
    </div>
  );
}
